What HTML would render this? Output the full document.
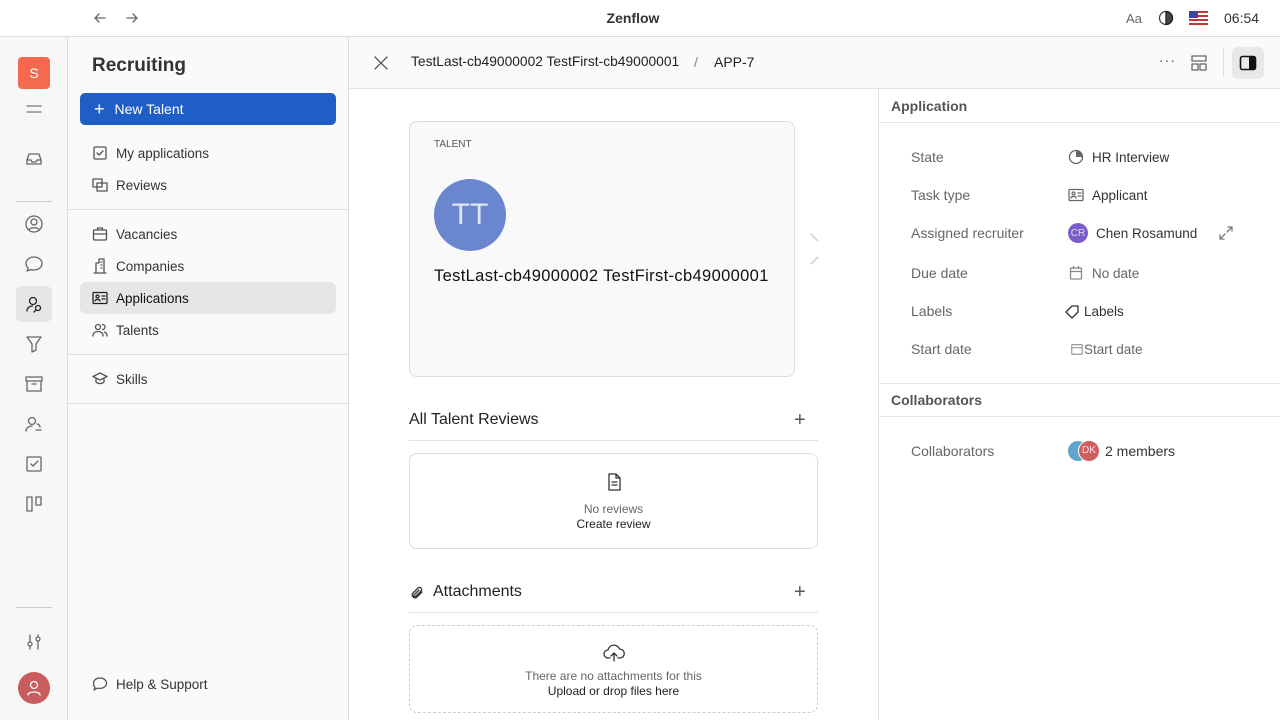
<!DOCTYPE html>
<html><head><meta charset="utf-8"><style>
*{box-sizing:border-box;margin:0;padding:0}
body{width:1280px;height:720px;overflow:hidden;font-family:"Liberation Sans",sans-serif;color:#222;background:#fff;position:relative;font-size:13px}
.abs{position:absolute}
svg{fill:none;stroke:currentColor;stroke-width:1.3;stroke-linecap:round;stroke-linejoin:round}
.top{left:0;top:0;width:1280px;height:37px;background:#fff;border-bottom:1px solid #ddd}
.rail{left:0;top:37px;width:68px;height:683px;background:#f7f7f7;border-right:1px solid #ddd}
.nav{left:68px;top:37px;width:281px;height:683px;background:#fafafa;border-right:1px solid #ddd}
.item{position:absolute;left:12px;width:256px;height:32px;display:flex;align-items:center;padding-left:12px;font-size:13.5px;color:#333;border-radius:6px}
.item svg{width:16px;height:16px;margin-right:8px;color:#555}
.hr{position:absolute;left:0;width:280px;border-top:1px solid #ddd}
.ri{position:absolute;left:16px;width:36px;height:36px;display:flex;align-items:center;justify-content:center;color:#666;border-radius:6px}
.ri svg{width:20px;height:20px}
.lbl{position:absolute;left:911px;font-size:14px;color:#666}
.val{position:absolute;left:1068px;font-size:13.5px;color:#333;display:flex;align-items:center}
.val svg{width:16px;height:16px;color:#666;margin-right:8px}
</style></head><body>
<div class="abs top"></div>
<svg class="abs" style="left:92px;top:10px;width:16px;height:16px;color:#666" viewBox="0 0 16 16"><path d="M13 8H3M7 4L3 8l4 4"/></svg>
<svg class="abs" style="left:124px;top:10px;width:16px;height:16px;color:#666" viewBox="0 0 16 16"><path d="M3 8h10M9 4l4 4-4 4"/></svg>
<div class="abs" style="left:0;width:1266px;top:10px;text-align:center;font-size:14px;font-weight:bold;color:#333">Zenflow</div>
<div class="abs" style="left:1126px;top:11px;font-size:13px;color:#666">Aa</div>
<svg class="abs" style="left:1158px;top:10px;width:16px;height:16px" viewBox="0 0 16 16"><circle cx="8" cy="8" r="6.5" stroke="#444"/><path d="M8 1.5a6.5 6.5 0 0 1 0 13z" fill="#444"/></svg>
<div class="abs" style="left:1189px;top:11px;width:19px;height:14px;background:repeating-linear-gradient(#c33 0 2px,#fff 2px 4px)"><div style="width:9px;height:7px;background:#3a4a9a"></div></div>
<div class="abs" style="left:1224px;top:10px;font-size:14px;color:#333">06:54</div>

<div class="abs rail">
<div class="abs" style="left:18px;top:20px;width:32px;height:32px;background:#f56a4e;border-radius:4px;color:#fff;text-align:center;line-height:32px;font-size:14px">S</div>
<svg class="abs" style="left:26px;top:64px;width:16px;height:16px;color:#777" viewBox="0 0 16 16"><path d="M1 5h14M1 11h14"/></svg>
<div class="ri" style="top:104px"><svg viewBox="0 0 20 20"><path d="M3 11l2-6h10l2 6v4H3zM3 11h4l1 2h4l1-2h4"/></svg></div>
<div class="abs" style="left:16px;top:164px;width:36px;border-top:1px solid #ccc"></div>
<div class="ri" style="top:169px"><svg viewBox="0 0 20 20"><circle cx="10" cy="10" r="8"/><circle cx="10" cy="8" r="3"/><path d="M5 16c1-3 9-3 10 0"/></svg></div>
<div class="ri" style="top:209px"><svg viewBox="0 0 20 20"><path d="M10 3c4.5 0 8 2.7 8 6.5S14.5 16 10 16c-1 0-2-.1-3-.4L3 17l1.2-3C2.8 12.8 2 11.3 2 9.5 2 5.7 5.5 3 10 3z"/></svg></div>
<div class="ri" style="top:249px;background:#e6e6e6;color:#222"><svg viewBox="0 0 20 20"><circle cx="9" cy="7" r="3.5"/><path d="M3 17c0-3 2.5-5 5.5-5"/><circle cx="14" cy="14" r="2.5"/><path d="M12 16l-2 2"/></svg></div>
<div class="ri" style="top:289px"><svg viewBox="0 0 20 20"><path d="M3 3h14l-5 7v6l-4 2v-8z"/></svg></div>
<div class="ri" style="top:329px"><svg viewBox="0 0 20 20"><rect x="2" y="3" width="16" height="4"/><path d="M3 7v10h14V7M8 10h4"/></svg></div>
<div class="ri" style="top:369px"><svg viewBox="0 0 20 20"><circle cx="8" cy="7" r="3.5"/><path d="M2 17c0-3 3-5 6-5M13 10a3 3 0 0 1 3 3M12 16h5"/></svg></div>
<div class="ri" style="top:409px"><svg viewBox="0 0 20 20"><rect x="3" y="3" width="14" height="14" rx="1"/><path d="M7 10l2 2 5-5"/></svg></div>
<div class="ri" style="top:449px"><svg viewBox="0 0 20 20"><rect x="3" y="3" width="5" height="14"/><rect x="12" y="3" width="5" height="8"/></svg></div>
<div class="abs" style="left:16px;top:570px;width:36px;border-top:1px solid #ccc"></div>
<div class="ri" style="top:587px"><svg viewBox="0 0 20 20"><path d="M6 3v14M14 3v14"/><circle cx="6" cy="12" r="2" fill="#f7f7f7"/><circle cx="14" cy="7" r="2" fill="#f7f7f7"/></svg></div>
<div class="abs" style="left:18px;top:635px;width:32px;height:32px;border-radius:50%;background:#c95c5c;display:flex;align-items:center;justify-content:center;color:#fff"><svg style="width:20px;height:20px" viewBox="0 0 20 20"><circle cx="10" cy="7" r="3.5"/><path d="M4 17c0-4 12-4 12 0"/></svg></div>
</div>

<div class="abs nav">
<div class="abs" style="left:24px;top:18px;font-size:19px;font-weight:bold;color:#333">Recruiting</div>
<div class="abs" style="left:12px;top:56px;width:256px;height:32px;background:#1f5fc5;border-radius:5px;color:#fff;font-size:14px;display:flex;align-items:center;padding-left:14px"><span style="font-size:18px;margin-right:10px;font-weight:300">+</span>New Talent</div>
<div class="item" style="top:100px"><svg viewBox="0 0 16 16"><rect x="2" y="2" width="12" height="12" rx="1"/><path d="M5 8l2 2 4-4"/></svg>My applications</div>
<div class="item" style="top:132px"><svg viewBox="0 0 16 16"><rect x="1" y="2" width="9" height="8"/><rect x="5" y="6" width="10" height="8"/></svg>Reviews</div>
<div class="hr" style="top:172px"></div>
<div class="item" style="top:181px"><svg viewBox="0 0 16 16"><rect x="1.5" y="4" width="13" height="10" rx="1"/><path d="M5.5 4V2h5v2M1.5 8h13"/></svg>Vacancies</div>
<div class="item" style="top:213px"><svg viewBox="0 0 16 16"><path d="M2 15h12M4 15V5h3V1h5v14M9 4h1M9 7h1M9 10h1"/></svg>Companies</div>
<div class="item" style="top:245px;background:#e6e6e6;color:#111"><svg viewBox="0 0 16 16" style="color:#222"><rect x="1" y="2.5" width="14" height="11" rx="1"/><circle cx="5.5" cy="6.5" r="1.5"/><path d="M3 11c0-2 5-2 5 0M10 6h3M10 9h3"/></svg>Applications</div>
<div class="item" style="top:277px"><svg viewBox="0 0 16 16"><circle cx="6" cy="5" r="2.5"/><path d="M1 14c0-3 2-4.5 5-4.5s5 1.5 5 4.5M10.5 2.5a2.5 2.5 0 0 1 0 5M12.5 10c1.5.5 2.5 2 2.5 4"/></svg>Talents</div>
<div class="hr" style="top:317px"></div>
<div class="item" style="top:326px"><svg viewBox="0 0 16 16"><path d="M8 2l7 3.5-7 3.5-7-3.5zM4 7v4c2 2 6 2 8 0V7"/></svg>Skills</div>
<div class="hr" style="top:366px"></div>
<div class="item" style="top:631px"><svg viewBox="0 0 16 16"><path d="M8 2c3.6 0 6.5 2.2 6.5 5.2S11.6 12.4 8 12.4c-.8 0-1.6-.1-2.4-.3L2 14l1-2.6C2 10.4 1.5 8.9 1.5 7.2 1.5 4.2 4.4 2 8 2z"/></svg>Help &amp; Support</div>
</div>

<div class="abs" style="left:349px;top:37px;width:931px;height:52px;background:#fafafa;border-bottom:1px solid #e3e3e3"></div>
<svg class="abs" style="left:372px;top:54px;width:18px;height:18px;color:#555" viewBox="0 0 18 18"><path d="M3 3l12 12M15 3L3 15"/></svg>
<div class="abs" style="left:411px;top:54px;font-size:13.8px;color:#222">TestLast-cb49000002 TestFirst-cb49000001</div>
<div class="abs" style="left:694px;top:54px;font-size:14px;color:#888">/</div>
<div class="abs" style="left:714px;top:54px;font-size:14px;color:#222">APP-7</div>
<div class="abs" style="left:1159px;top:52px;font-size:14px;color:#555;letter-spacing:1px">···</div>
<svg class="abs" style="left:1190px;top:54px;width:18px;height:18px;color:#666" viewBox="0 0 18 18"><rect x="2" y="2" width="14" height="5"/><rect x="2" y="10" width="6" height="6"/><rect x="10" y="10" width="6" height="6"/></svg>
<div class="abs" style="left:1223px;top:49px;height:28px;border-left:1px solid #ddd"></div>
<div class="abs" style="left:1232px;top:47px;width:32px;height:32px;background:#e8e8e8;border-radius:6px"></div>
<svg class="abs" style="left:1239px;top:54px;width:18px;height:18px" viewBox="0 0 18 18"><rect x="1.5" y="2.5" width="15" height="13" rx="2" stroke="#111" stroke-width="1.6"/><rect x="10" y="3" width="6" height="12" fill="#111" stroke="none"/></svg>

<div class="abs" style="left:409px;top:121px;width:386px;height:256px;background:#f9f9f9;border:1px solid #ddd;border-radius:8px"></div>
<div class="abs" style="left:434px;top:139px;font-size:10px;color:#555">TALENT</div>
<div class="abs" style="left:434px;top:179px;width:72px;height:72px;border-radius:50%;background:#6986cf;color:#dfe6f7;font-size:30px;text-align:center;line-height:72px">TT</div>
<div class="abs" style="left:434px;top:267px;font-size:16.5px;color:#111;letter-spacing:0.35px">TestLast-cb49000002 TestFirst-cb49000001</div>
<svg class="abs" style="left:808px;top:231px;width:12px;height:36px;color:#ccc" viewBox="0 0 12 36"><path d="M3 3l7 7M10 26l-7 7"/></svg>

<div class="abs" style="left:409px;top:411px;font-size:16px;color:#222">All Talent Reviews</div>
<div class="abs" style="left:794px;top:409px;font-size:20px;color:#555">+</div>
<div class="abs" style="left:409px;top:440px;width:409px;border-top:1px solid #e3e3e3"></div>
<div class="abs" style="left:409px;top:453px;width:409px;height:96px;border:1px solid #ddd;border-radius:8px;text-align:center">
<svg style="width:20px;height:20px;margin-top:18px;color:#333" viewBox="0 0 20 20"><path d="M5 2h7l4 4v12H5zM12 2v4h4M8 10h5M8 13h5"/></svg>
<div style="font-size:12px;color:#666;margin-top:7px">No reviews</div>
<div style="font-size:12px;color:#222;margin-top:1px">Create review</div></div>

<svg class="abs" style="left:409px;top:585px;width:16px;height:16px;color:#333" viewBox="0 0 16 16"><path d="M13 7l-5.5 5.5a3 3 0 0 1-4-4L9 3a2 2 0 0 1 3 3l-5.5 5.5a1 1 0 0 1-1.5-1.5L10 5"/></svg>
<div class="abs" style="left:433px;top:583px;font-size:16px;color:#222">Attachments</div>
<div class="abs" style="left:794px;top:581px;font-size:20px;color:#555">+</div>
<div class="abs" style="left:409px;top:612px;width:409px;border-top:1px solid #e3e3e3"></div>
<div class="abs" style="left:409px;top:625px;width:409px;height:88px;border:1px dashed #ccc;border-radius:8px;text-align:center">
<svg style="width:22px;height:22px;margin-top:16px;color:#333" viewBox="0 0 22 22"><path d="M7 16H5a4 4 0 0 1 0-8 6 6 0 0 1 11.5-1A4.5 4.5 0 0 1 17 16h-2M11 19v-8M8 14l3-3 3 3"/></svg>
<div style="font-size:12px;color:#666;margin-top:2px">There are no attachments for this</div>
<div style="font-size:12px;color:#222;margin-top:1px">Upload or drop files here</div></div>

<div class="abs" style="left:878px;top:89px;width:402px;height:631px;border-left:1px solid #e3e3e3"></div>
<div class="abs" style="left:891px;top:98px;font-size:14px;font-weight:bold;color:#555">Application</div>
<div class="abs" style="left:879px;top:122px;width:401px;border-top:1px solid #e8e8e8"></div>
<div class="lbl" style="top:149px">State</div>
<div class="val" style="top:149px"><svg viewBox="0 0 16 16"><circle cx="8" cy="8" r="6.5"/><path d="M8 8V1.5A6.5 6.5 0 0 1 14.5 8z" fill="#666" stroke="none"/></svg>HR Interview</div>
<div class="lbl" style="top:187px">Task type</div>
<div class="val" style="top:187px"><svg viewBox="0 0 16 16"><rect x="1" y="2.5" width="14" height="11" rx="1"/><circle cx="5.5" cy="6.5" r="1.5"/><path d="M3 11c0-2 5-2 5 0M10 6h3M10 9h3"/></svg>Applicant</div>
<div class="lbl" style="top:225px">Assigned recruiter</div>
<div class="val" style="top:223px"><span style="width:20px;height:20px;border-radius:50%;background:#7a5ccc;color:#ddd;font-size:10px;display:inline-flex;align-items:center;justify-content:center;margin-right:8px">CR</span>Chen Rosamund</div>
<svg class="abs" style="left:1218px;top:225px;width:16px;height:16px;color:#777" viewBox="0 0 16 16"><path d="M10 2h4v4M14 2l-5 5M6 14H2v-4M2 14l5-5"/></svg>
<div class="lbl" style="top:265px">Due date</div>
<div class="val" style="top:265px;color:#666"><svg viewBox="0 0 16 16" style="color:#888"><rect x="2.5" y="3" width="11" height="11" rx="1"/><path d="M2.5 6.5h11M5.5 1.5v2M10.5 1.5v2"/></svg>No date</div>
<div class="lbl" style="top:303px">Labels</div>
<div class="val" style="top:303px;left:1064px"><svg viewBox="0 0 16 16" style="color:#333;margin-right:4px"><path d="M2 9l6-6h6v6l-6 6z"/></svg>Labels</div>
<div class="lbl" style="top:341px">Start date</div>
<div class="val" style="top:341px;left:1070px;color:#666"><svg viewBox="0 0 16 16" style="color:#999;margin-right:0;width:14px"><rect x="2" y="3" width="12" height="11" rx="1"/><path d="M2 6.5h12"/></svg>Start date</div>
<div class="abs" style="left:879px;top:383px;width:401px;border-top:1px solid #e8e8e8"></div>
<div class="abs" style="left:891px;top:392px;font-size:14px;font-weight:bold;color:#555">Collaborators</div>
<div class="abs" style="left:879px;top:416px;width:401px;border-top:1px solid #e8e8e8"></div>
<div class="lbl" style="top:443px">Collaborators</div>
<div class="abs" style="left:1068px;top:441px;width:20px;height:20px;border-radius:50%;background:#5fa5cc"></div>
<div class="abs" style="left:1078px;top:440px;width:22px;height:22px;border-radius:50%;background:#cf5f5f;border:1px solid #fff;color:#fde;font-size:10px;text-align:center;line-height:20px">DK</div>
<div class="abs" style="left:1105px;top:443px;font-size:14px;color:#333">2 members</div>
<style>.nav .item:last-of-type{top:668px}</style>
</body></html>
